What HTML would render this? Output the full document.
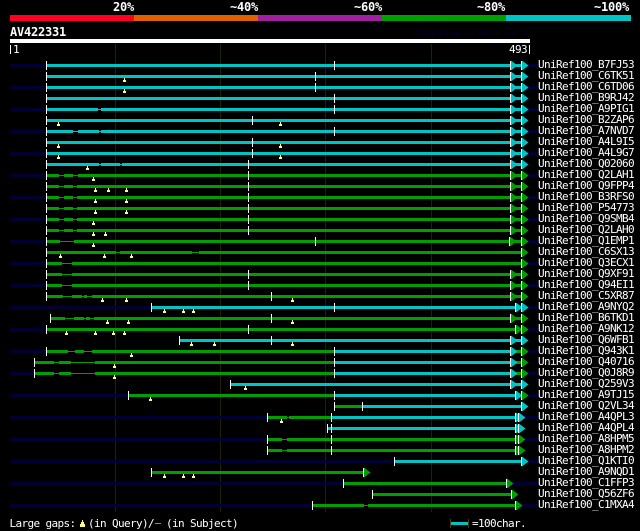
<!DOCTYPE html>
<html><head><meta charset="utf-8"><style>
html,body{margin:0;padding:0;background:#000;width:640px;height:531px;overflow:hidden}
svg{display:block}
text{font-family:"DejaVu Sans Mono","Liberation Mono",monospace;font-size:11px;letter-spacing:-0.62px;fill:#fff;white-space:pre}
.b{font-weight:bold;font-size:12px;letter-spacing:-0.22px}
.n{fill:#000033}.cy{fill:#00c4c4}.gr{fill:#009e00}
</style></head><body>
<svg width="640" height="531" viewBox="0 0 640 531" xmlns="http://www.w3.org/2000/svg">
<defs>
<g id="k"><rect x="0" y="-3" width="1" height="9" fill="#fff"/></g>
<g id="m"><rect x="0" y="3" width="1" height="2" fill="#ffff80"/><rect x="-1" y="5" width="3" height="2" fill="#ffff80"/></g>
<g id="tc"><rect x="0" y="-3" width="1" height="9" fill="#fff"/><polygon points="1,-3.5 7.5,1.5 1,6.5" fill="#00c4c4"/></g>
<g id="tg"><rect x="0" y="-3" width="1" height="9" fill="#fff"/><polygon points="1,-3.5 7.5,1.5 1,6.5" fill="#009e00"/></g>
</defs>
<rect x="10" y="15" width="124" height="6" fill="#ff0022"/><rect x="134" y="15" width="124" height="6" fill="#e06000"/><rect x="258" y="15" width="124" height="6" fill="#a020a0"/><rect x="382" y="15" width="124" height="6" fill="#00a000"/><rect x="506" y="15" width="125" height="6" fill="#00c4c4"/>
<text class="b" x="113" y="11">20%</text><text class="b" x="230" y="11">~40%</text><text class="b" x="354" y="11">~60%</text><text class="b" x="477" y="11">~80%</text><text class="b" x="594" y="11">~100%</text>
<text class="b" x="10" y="36">AV422331</text>
<text x="414" y="36" style="fill:#000033;font-size:8.3px;letter-spacing:0">AlignView.pm Beta rel.7</text>
<rect x="10" y="39" width="520" height="4" fill="#fff"/>
<rect x="10" y="45" width="1" height="9" fill="#fff"/><text x="13" y="53">1</text>
<text x="509" y="53">493</text><rect x="529" y="45" width="1" height="9" fill="#fff"/>
<rect x="115" y="44" width="1" height="468" fill="#222200"/><rect x="220" y="44" width="1" height="468" fill="#222200"/><rect x="325" y="44" width="1" height="468" fill="#222200"/><rect x="431" y="44" width="1" height="468" fill="#222200"/>

<g transform="translate(0,64)"><path class="n" d="M10 0H46V3H10ZM526 0H538V3H526Z"/><path class="cy" d="M46 0H521V3H46Z"/><use href="#k" x="46"/><use href="#k" x="334"/><use href="#tc" x="510"/><use href="#tc" x="521"/><text x="538" y="4">UniRef100_B7FJ53</text></g>
<g transform="translate(0,75)"><path class="cy" d="M46 0H521V3H46Z"/><use href="#k" x="46"/><use href="#k" x="315"/><use href="#m" x="124"/><use href="#tc" x="510"/><use href="#tc" x="521"/><text x="538" y="4">UniRef100_C6TK51</text></g>
<g transform="translate(0,86)"><path class="n" d="M10 0H46V3H10ZM526 0H538V3H526Z"/><path class="cy" d="M46 0H521V3H46Z"/><use href="#k" x="46"/><use href="#k" x="315"/><use href="#m" x="124"/><use href="#tc" x="510"/><use href="#tc" x="521"/><text x="538" y="4">UniRef100_C6TD06</text></g>
<g transform="translate(0,97)"><path class="cy" d="M46 0H521V3H46Z"/><use href="#k" x="46"/><use href="#k" x="334"/><use href="#tc" x="510"/><use href="#tc" x="521"/><text x="538" y="4">UniRef100_B9RJ42</text></g>
<g transform="translate(0,108)"><path class="n" d="M10 0H46V3H10ZM526 0H538V3H526Z"/><path class="cy" d="M46 0H98V3H46ZM98 1H101V2H98ZM101 0H521V3H101Z"/><use href="#k" x="46"/><use href="#k" x="334"/><use href="#tc" x="510"/><use href="#tc" x="521"/><text x="538" y="4">UniRef100_A9PIG1</text></g>
<g transform="translate(0,119)"><path class="cy" d="M46 0H521V3H46Z"/><use href="#k" x="46"/><use href="#k" x="252"/><use href="#m" x="58"/><use href="#m" x="280"/><use href="#tc" x="510"/><use href="#tc" x="521"/><text x="538" y="4">UniRef100_B2ZAP6</text></g>
<g transform="translate(0,130)"><path class="n" d="M10 0H46V3H10ZM526 0H538V3H526Z"/><path class="cy" d="M46 0H73V3H46ZM73 1H78V2H73ZM78 0H99V3H78ZM99 1H101V2H99ZM101 0H521V3H101Z"/><use href="#k" x="46"/><use href="#k" x="334"/><use href="#tc" x="510"/><use href="#tc" x="521"/><text x="538" y="4">UniRef100_A7NVD7</text></g>
<g transform="translate(0,141)"><path class="cy" d="M46 0H521V3H46Z"/><use href="#k" x="46"/><use href="#k" x="252"/><use href="#m" x="58"/><use href="#m" x="280"/><use href="#tc" x="510"/><use href="#tc" x="521"/><text x="538" y="4">UniRef100_A4L9I5</text></g>
<g transform="translate(0,152)"><path class="n" d="M10 0H46V3H10ZM526 0H538V3H526Z"/><path class="cy" d="M46 0H521V3H46Z"/><use href="#k" x="46"/><use href="#k" x="252"/><use href="#m" x="58"/><use href="#m" x="280"/><use href="#tc" x="510"/><use href="#tc" x="521"/><text x="538" y="4">UniRef100_A4L9G7</text></g>
<g transform="translate(0,163)"><path class="cy" d="M46 0H99V3H46ZM99 1H101V2H99ZM101 0H120V3H101ZM120 1H122V2H120ZM122 0H521V3H122Z"/><use href="#k" x="46"/><use href="#k" x="248"/><use href="#m" x="87"/><use href="#tc" x="510"/><use href="#tc" x="521"/><text x="538" y="4">UniRef100_Q02060</text></g>
<g transform="translate(0,174)"><path class="n" d="M10 0H46V3H10ZM526 0H538V3H526Z"/><path class="gr" d="M46 0H59V3H46ZM59 1H64V2H59ZM64 0H73V3H64ZM73 1H78V2H73ZM78 0H521V3H78Z"/><use href="#k" x="46"/><use href="#k" x="248"/><use href="#m" x="93"/><use href="#tg" x="510"/><use href="#tg" x="521"/><text x="538" y="4">UniRef100_Q2LAH1</text></g>
<g transform="translate(0,185)"><path class="gr" d="M46 0H59V3H46ZM59 1H64V2H59ZM64 0H73V3H64ZM73 1H77V2H73ZM77 0H521V3H77Z"/><use href="#k" x="46"/><use href="#k" x="248"/><use href="#m" x="95"/><use href="#m" x="108"/><use href="#m" x="126"/><use href="#tg" x="510"/><use href="#tg" x="521"/><text x="538" y="4">UniRef100_Q9FPP4</text></g>
<g transform="translate(0,196)"><path class="n" d="M10 0H46V3H10ZM526 0H538V3H526Z"/><path class="gr" d="M46 0H59V3H46ZM59 1H64V2H59ZM64 0H73V3H64ZM73 1H77V2H73ZM77 0H521V3H77Z"/><use href="#k" x="46"/><use href="#k" x="248"/><use href="#m" x="95"/><use href="#m" x="126"/><use href="#tg" x="510"/><use href="#tg" x="521"/><text x="538" y="4">UniRef100_B3RFS0</text></g>
<g transform="translate(0,207)"><path class="gr" d="M46 0H59V3H46ZM59 1H64V2H59ZM64 0H73V3H64ZM73 1H77V2H73ZM77 0H521V3H77Z"/><use href="#k" x="46"/><use href="#k" x="248"/><use href="#m" x="95"/><use href="#m" x="126"/><use href="#tg" x="510"/><use href="#tg" x="521"/><text x="538" y="4">UniRef100_P54773</text></g>
<g transform="translate(0,218)"><path class="n" d="M10 0H46V3H10ZM526 0H538V3H526Z"/><path class="gr" d="M46 0H59V3H46ZM59 1H64V2H59ZM64 0H73V3H64ZM73 1H77V2H73ZM77 0H521V3H77Z"/><use href="#k" x="46"/><use href="#k" x="248"/><use href="#m" x="93"/><use href="#tg" x="510"/><use href="#tg" x="521"/><text x="538" y="4">UniRef100_Q9SMB4</text></g>
<g transform="translate(0,229)"><path class="gr" d="M46 0H59V3H46ZM59 1H64V2H59ZM64 0H73V3H64ZM73 1H77V2H73ZM77 0H521V3H77Z"/><use href="#k" x="46"/><use href="#k" x="248"/><use href="#m" x="93"/><use href="#m" x="105"/><use href="#tg" x="510"/><use href="#tg" x="521"/><text x="538" y="4">UniRef100_Q2LAH0</text></g>
<g transform="translate(0,240)"><path class="n" d="M10 0H46V3H10ZM526 0H538V3H526Z"/><path class="gr" d="M46 0H60V3H46ZM60 1H74V2H60ZM74 0H521V3H74Z"/><use href="#k" x="46"/><use href="#k" x="315"/><use href="#m" x="93"/><use href="#tg" x="509"/><use href="#tg" x="521"/><text x="538" y="4">UniRef100_Q1EMP1</text></g>
<g transform="translate(0,251)"><path class="gr" d="M46 0H116V3H46ZM116 1H120V2H116ZM120 0H192V3H120ZM192 1H199V2H192ZM199 0H521V3H199Z"/><use href="#k" x="46"/><use href="#m" x="60"/><use href="#m" x="104"/><use href="#m" x="131"/><use href="#tg" x="521"/><text x="538" y="4">UniRef100_C6SX13</text></g>
<g transform="translate(0,262)"><path class="n" d="M10 0H46V3H10ZM526 0H538V3H526Z"/><path class="gr" d="M46 0H62V3H46ZM62 1H72V2H62ZM72 0H521V3H72Z"/><use href="#k" x="46"/><use href="#tg" x="521"/><text x="538" y="4">UniRef100_Q3ECX1</text></g>
<g transform="translate(0,273)"><path class="gr" d="M46 0H62V3H46ZM62 1H72V2H62ZM72 0H521V3H72Z"/><use href="#k" x="46"/><use href="#k" x="248"/><use href="#tg" x="510"/><use href="#tg" x="521"/><text x="538" y="4">UniRef100_Q9XF91</text></g>
<g transform="translate(0,284)"><path class="n" d="M10 0H46V3H10ZM526 0H538V3H526Z"/><path class="gr" d="M46 0H62V3H46ZM62 1H72V2H62ZM72 0H521V3H72Z"/><use href="#k" x="46"/><use href="#k" x="248"/><use href="#tg" x="510"/><use href="#tg" x="521"/><text x="538" y="4">UniRef100_Q94EI1</text></g>
<g transform="translate(0,295)"><path class="gr" d="M46 0H63V3H46ZM63 1H72V2H63ZM72 0H82V3H72ZM82 1H84V2H82ZM84 0H87V3H84ZM87 1H92V2H87ZM92 0H521V3H92Z"/><use href="#k" x="46"/><use href="#k" x="271"/><use href="#m" x="102"/><use href="#m" x="126"/><use href="#m" x="292"/><use href="#tg" x="510"/><use href="#tg" x="521"/><text x="538" y="4">UniRef100_C5XR87</text></g>
<g transform="translate(0,306)"><path class="n" d="M10 0H151V3H10ZM526 0H538V3H526Z"/><path class="cy" d="M151 0H521V3H151Z"/><use href="#k" x="151"/><use href="#k" x="334"/><use href="#m" x="164"/><use href="#m" x="183"/><use href="#m" x="193"/><use href="#tc" x="515"/><use href="#tc" x="521"/><text x="538" y="4">UniRef100_A9NYQ2</text></g>
<g transform="translate(0,317)"><path class="gr" d="M50 0H65V3H50ZM65 1H74V2H65ZM74 0H84V3H74ZM84 1H86V2H84ZM86 0H90V3H86ZM90 1H94V2H90ZM94 0H521V3H94Z"/><use href="#k" x="50"/><use href="#k" x="271"/><use href="#m" x="107"/><use href="#m" x="128"/><use href="#m" x="292"/><use href="#tg" x="510"/><use href="#tg" x="521"/><text x="538" y="4">UniRef100_B6TKD1</text></g>
<g transform="translate(0,328)"><path class="n" d="M10 0H46V3H10ZM526 0H538V3H526Z"/><path class="gr" d="M46 0H521V3H46Z"/><use href="#k" x="46"/><use href="#k" x="248"/><use href="#m" x="66"/><use href="#m" x="95"/><use href="#m" x="113"/><use href="#m" x="124"/><use href="#tg" x="515"/><use href="#tg" x="521"/><text x="538" y="4">UniRef100_A9NK12</text></g>
<g transform="translate(0,339)"><path class="cy" d="M179 0H521V3H179Z"/><use href="#k" x="179"/><use href="#k" x="271"/><use href="#m" x="191"/><use href="#m" x="214"/><use href="#m" x="292"/><use href="#tc" x="510"/><use href="#tc" x="521"/><text x="538" y="4">UniRef100_Q6WFB1</text></g>
<g transform="translate(0,350)"><path class="n" d="M10 0H46V3H10ZM526 0H538V3H526Z"/><path class="gr" d="M46 0H68V3H46ZM68 1H75V2H68ZM75 0H84V3H75ZM84 1H92V2H84ZM92 0H334V3H92ZM510 0H521V3H510Z"/><path class="cy" d="M334 0H510V3H334Z"/><use href="#k" x="46"/><use href="#k" x="334"/><use href="#m" x="131"/><use href="#tc" x="510"/><use href="#tg" x="521"/><text x="538" y="4">UniRef100_Q943K1</text></g>
<g transform="translate(0,361)"><path class="gr" d="M34 0H54V3H34ZM54 1H59V2H54ZM59 0H71V3H59ZM71 1H95V2H71ZM95 0H334V3H95ZM510 0H521V3H510Z"/><path class="cy" d="M334 0H510V3H334Z"/><use href="#k" x="34"/><use href="#k" x="334"/><use href="#m" x="114"/><use href="#tc" x="510"/><use href="#tg" x="521"/><text x="538" y="4">UniRef100_Q40716</text></g>
<g transform="translate(0,372)"><path class="n" d="M10 0H34V3H10ZM526 0H538V3H526Z"/><path class="gr" d="M34 0H54V3H34ZM54 1H59V2H54ZM59 0H71V3H59ZM71 1H95V2H71ZM95 0H334V3H95ZM510 0H521V3H510Z"/><path class="cy" d="M334 0H510V3H334Z"/><use href="#k" x="34"/><use href="#k" x="334"/><use href="#m" x="114"/><use href="#tc" x="510"/><use href="#tg" x="521"/><text x="538" y="4">UniRef100_Q0J8R9</text></g>
<g transform="translate(0,383)"><path class="cy" d="M230 0H521V3H230Z"/><use href="#k" x="230"/><use href="#m" x="245"/><use href="#tc" x="510"/><use href="#tc" x="521"/><text x="538" y="4">UniRef100_Q259V3</text></g>
<g transform="translate(0,394)"><path class="n" d="M10 0H128V3H10ZM526 0H538V3H526Z"/><path class="gr" d="M128 0H334V3H128ZM515 0H521V3H515Z"/><path class="cy" d="M334 0H515V3H334Z"/><use href="#k" x="128"/><use href="#k" x="334"/><use href="#m" x="150"/><use href="#tc" x="515"/><use href="#tg" x="521"/><text x="538" y="4">UniRef100_A9TJ15</text></g>
<g transform="translate(0,405)"><path class="gr" d="M334 0H362V3H334Z"/><path class="cy" d="M362 0H521V3H362Z"/><use href="#k" x="334"/><use href="#k" x="362"/><use href="#tc" x="521"/><text x="538" y="4">UniRef100_Q2VL34</text></g>
<g transform="translate(0,416)"><path class="n" d="M10 0H267V3H10ZM524 0H538V3H524Z"/><path class="gr" d="M267 0H287V3H267ZM287 1H289V2H287ZM289 0H331V3H289Z"/><path class="cy" d="M331 0H518V3H331Z"/><use href="#k" x="267"/><use href="#k" x="331"/><use href="#m" x="281"/><use href="#tc" x="515"/><use href="#tc" x="518"/><text x="538" y="4">UniRef100_A4QPL3</text></g>
<g transform="translate(0,427)"><path class="cy" d="M327 0H518V3H327Z"/><use href="#k" x="327"/><use href="#k" x="331"/><use href="#tc" x="515"/><use href="#tc" x="518"/><text x="538" y="4">UniRef100_A4QPL4</text></g>
<g transform="translate(0,438)"><path class="n" d="M10 0H267V3H10ZM524 0H538V3H524Z"/><path class="gr" d="M267 0H282V3H267ZM282 1H287V2H282ZM287 0H518V3H287Z"/><use href="#k" x="267"/><use href="#k" x="331"/><use href="#tg" x="515"/><use href="#tg" x="518"/><text x="538" y="4">UniRef100_A8HPM5</text></g>
<g transform="translate(0,449)"><path class="gr" d="M267 0H282V3H267ZM282 1H287V2H282ZM287 0H518V3H287Z"/><use href="#k" x="267"/><use href="#k" x="331"/><use href="#tg" x="515"/><use href="#tg" x="518"/><text x="538" y="4">UniRef100_A8HPM2</text></g>
<g transform="translate(0,460)"><path class="n" d="M10 0H394V3H10ZM526 0H538V3H526Z"/><path class="cy" d="M394 0H521V3H394Z"/><use href="#k" x="394"/><use href="#tc" x="521"/><text x="538" y="4">UniRef100_Q1KTI0</text></g>
<g transform="translate(0,471)"><path class="gr" d="M151 0H363V3H151Z"/><use href="#k" x="151"/><use href="#m" x="164"/><use href="#m" x="183"/><use href="#m" x="193"/><use href="#tg" x="363"/><text x="538" y="4">UniRef100_A9NQD1</text></g>
<g transform="translate(0,482)"><path class="n" d="M10 0H343V3H10ZM512 0H538V3H512Z"/><path class="gr" d="M343 0H506V3H343Z"/><use href="#k" x="343"/><use href="#tg" x="506"/><text x="538" y="4">UniRef100_C1FFP3</text></g>
<g transform="translate(0,493)"><path class="gr" d="M372 0H511V3H372Z"/><use href="#k" x="372"/><use href="#tg" x="511"/><text x="538" y="4">UniRef100_Q56ZF6</text></g>
<g transform="translate(0,504)"><path class="n" d="M10 0H312V3H10ZM521 0H538V3H521Z"/><path class="gr" d="M312 0H364V3H312ZM364 1H368V2H364ZM368 0H515V3H368Z"/><use href="#k" x="312"/><use href="#tg" x="515"/><text x="538" y="4">UniRef100_C1MXA4</text></g>

<text x="9.5" y="527">Large gaps:</text>
<rect x="82" y="520" width="1" height="3" fill="#ffff80"/><rect x="81" y="522" width="3" height="2" fill="#ffff80"/><rect x="80" y="524" width="5" height="3" fill="#ffff80"/>
<text x="88" y="527">(in Query)/</text>
<rect x="155" y="523" width="6" height="1" fill="#00c4c4"/>
<text x="166" y="527">(in Subject)</text>
<rect x="450" y="519" width="1" height="9" fill="#444400"/><rect x="468" y="519" width="1" height="9" fill="#444400"/>
<rect x="451" y="522" width="17" height="3" fill="#00c4c4"/>
<text x="472" y="527">=100char.</text>
</svg>
</body></html>
